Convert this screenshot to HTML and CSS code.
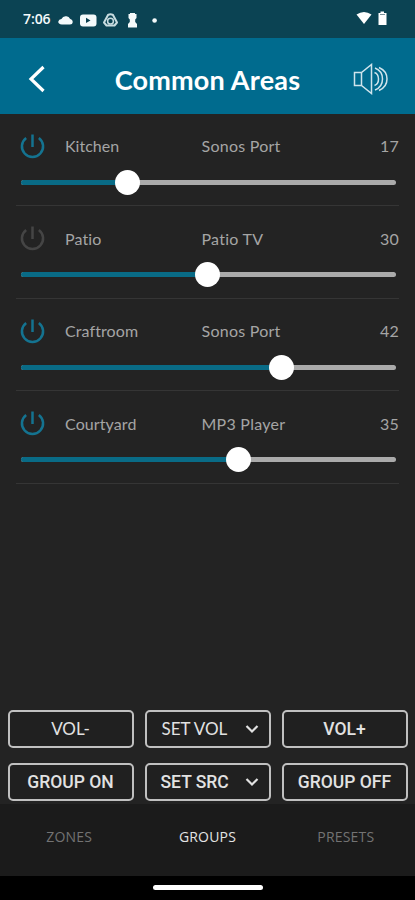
FILE: index.html
```
<!DOCTYPE html>
<html lang="en">
<head>
<meta charset="utf-8">
<title>Common Areas</title>
<link rel="stylesheet" href="styles.css">
</head>
<body>
<svg width="0" height="0" class="defs">
  <symbol id="power" viewBox="0 0 26 26"><path d="M6.4 4.6A11 11 0 1 0 19.6 4.6M13 1V14" fill="none" stroke="currentColor" stroke-width="2.6"/></symbol>
  <symbol id="chev" viewBox="0 0 14 10"><path d="M1.5 2L7 7.5L12.5 2" fill="none" stroke="currentColor" stroke-width="2.2"/></symbol>
</svg>
<div class="status">
  <span class="time">7:06</span>
  <svg class="notif" width="100" height="18" viewBox="0 0 100 18" fill="#f4fafb">
    <path d="M4 14.5Q0 14 .3 11.5Q.8 9 3.4 9Q5 5.7 8.5 6.3Q11 6.700 12 8.800Q14.800 9.500 14.800 12Q14.600 14.500 12 14.500Z"/>
    <rect x="22" y="4.500" width="16.500" height="12" rx="3"/><path d="M28 7.800V13L32.500 10.400Z" fill="#0b4050"/>
    <path d="M50 5Q52.500 3.700 55 5L59 12.500L56.500 15.500H48.500L46 12.500Z" fill="none" stroke="#c8dce0" stroke-width="2" stroke-linejoin="round"/><circle cx="52.500" cy="11.200" r="2.900" fill="none" stroke="#c8dce0" stroke-width="1.500"/>
    <path d="M70.500 4H72V3H77V4H78.500V8L77.200 9.500V12L79 14V17.500H70V14L71.800 12V9.500L70.500 8Z"/>
    <circle cx="96.600" cy="10.500" r="2.300"/>
  </svg>
  <svg class="system" width="32" height="16" viewBox="0 0 32 16" fill="#fff">
    <path d="M1.500 3.500Q9 -1.500 16.500 3.500L9 13Z"/><path d="M23.500 2H25.500V.5H29V2H31.500V14H23.500Z"/><path d="M25 3.500H30" stroke="#78909a"/>
  </svg>
</div>
<header class="header">
  <svg class="back" width="18" height="28" viewBox="0 0 18 28"><path d="M15.500 2L3 14L15.500 26" fill="none" stroke="#fff" stroke-width="3.200"/></svg>
  <h1>Common Areas</h1>
  <svg class="speaker" width="36" height="32" viewBox="0 0 36 32" fill="none" stroke="#cfe4ec" stroke-width="1.500"><path d="M1.500 9.500H8.500L18.500 1.500V30.500L8.500 22.500H1.500ZM8.500 9.500V22.500M21.500 9.500Q25.500 11 25.500 16Q25.500 21 21.500 22.500M22 5Q29.500 8 29.500 16Q29.500 24 22 27M26 4.500Q34 8 34 16Q34 24 26 27.500"/></svg>
</header>
<main class="zones">
  <section class="zone">
    <div class="info"><svg class="power on"><use href="#power"/></svg><span class="name kitchen">Kitchen</span><span class="source">Sonos Port</span><span class="level">17</span></div>
    <div class="track"><div class="fill" style="width:106.500px"><i class="thumb"></i></div></div>
  </section>
  <section class="zone">
    <div class="info"><svg class="power"><use href="#power"/></svg><span class="name">Patio</span><span class="source">Patio TV</span><span class="level">30</span></div>
    <div class="track"><div class="fill" style="width:187px"><i class="thumb"></i></div></div>
  </section>
  <section class="zone">
    <div class="info"><svg class="power on"><use href="#power"/></svg><span class="name">Craftroom</span><span class="source">Sonos Port</span><span class="level">42</span></div>
    <div class="track"><div class="fill" style="width:261px"><i class="thumb"></i></div></div>
  </section>
  <section class="zone">
    <div class="info"><svg class="power on"><use href="#power"/></svg><span class="name">Courtyard</span><span class="source">MP3 Player</span><span class="level">35</span></div>
    <div class="track"><div class="fill" style="width:218px"><i class="thumb"></i></div></div>
  </section>
</main>
<div class="actions">
  <button>VOL-</button>
  <button class="select"><span>SET VOL</span><svg width="14" height="10"><use href="#chev"/></svg></button>
  <button class="medium">VOL+</button>
  <button class="medium">GROUP ON</button>
  <button class="select medium"><span>SET SRC</span><svg width="14" height="10"><use href="#chev"/></svg></button>
  <button class="medium">GROUP OFF</button>
</div>
<nav class="tabs"><a>ZONES</a><a class="active">GROUPS</a><a>PRESETS</a></nav>
<div class="home"><i></i></div>
</body>
</html>
```
FILE: styles.css
```
* { box-sizing: border-box; }
body { margin: 0; width: 415px; height: 900px; overflow: hidden; display: flex; flex-direction: column; background: #232323; color: #a5a5a5; font-family: Lato, "Open Sans", sans-serif; }
svg { display: block; flex: none; }
.defs { position: absolute; }
.status { height: 38px; flex: none; display: flex; align-items: center; padding: 0 28px 0 23px; background: #0b4353; color: #f4fafb; }
.time { width: 35px; font: 600 14px/18px "Open Sans", sans-serif; white-space: nowrap; letter-spacing: -.1px; }
.notif { margin-top: -1px; }
.system { margin-left: auto; }
.header { height: 75.5px; flex: none; display: grid; grid-template-columns: 80px 1fr 80px; align-items: center; background: #006b8e; color: #fff; }
.back { margin-left: 28px; margin-top: 6px; }
.speaker { margin-top: 7px; margin-left: 18px; }
h1 { margin: 8px 0 0; text-align: center; white-space: nowrap; font-size: 27px; line-height: 34px; font-weight: 700; letter-spacing: .2px; }
.zones { flex: 1; padding: 0 16px; }
.zone { height: 92.6px; padding: 19px 0 0 4.5px; border-bottom: 1px solid #353535; }
.info { display: grid; grid-template-columns: 44.5px 136.5px 1fr 40px; align-items: center; height: 26px; font-size: 16px; letter-spacing: .25px; white-space: nowrap; }
.name { letter-spacing: .1px; }
.kitchen { letter-spacing: 0; }
.power { width: 25px; height: 26px; margin-left: -1px; color: #454545; }
.power.on { color: #147390; }
.level { text-align: right; }
.track { width: 375px; height: 5px; margin-top: 21px; border-radius: 3px; background: #aaa; }
.fill { position: relative; height: 5px; border-radius: 3px; background: #096b86; }
.thumb { position: absolute; right: -12.5px; top: -10px; width: 25px; height: 25px; border-radius: 50%; background: #fff; }
.actions { height: 94px; flex: none; display: grid; grid-template-columns: repeat(3, 126px); grid-template-rows: 38px 38px; gap: 14.5px 11px; padding-left: 7.5px; }
button { display: flex; align-items: center; justify-content: center; padding: 0; border: 2px solid #c0c0c0; border-radius: 5px; background: #202020; color: #e2e2e2; font: 400 17px/20px Lato, sans-serif; white-space: nowrap; }
.medium { font: 500 17.5px/20px Roboto, sans-serif; letter-spacing: 0; }
.select { justify-content: space-between; padding: 0 10px 0 15px; }
.select.medium { padding-left: 14px; }
.tabs { height: 72px; flex: none; display: grid; grid-template-columns: repeat(3, 1fr); padding-top: 23px; background: #1b1b1b; color: #737373; font: 400 14px/20px "Open Sans", sans-serif; letter-spacing: .2px; text-align: center; }
.active { color: #e4e4e4; font-weight: 500; }
.home { height: 24px; flex: none; padding-top: 9px; background: #000; }
.home i { display: block; width: 110px; height: 5px; margin: 0 auto; border-radius: 3px; background: #fff; }
```
